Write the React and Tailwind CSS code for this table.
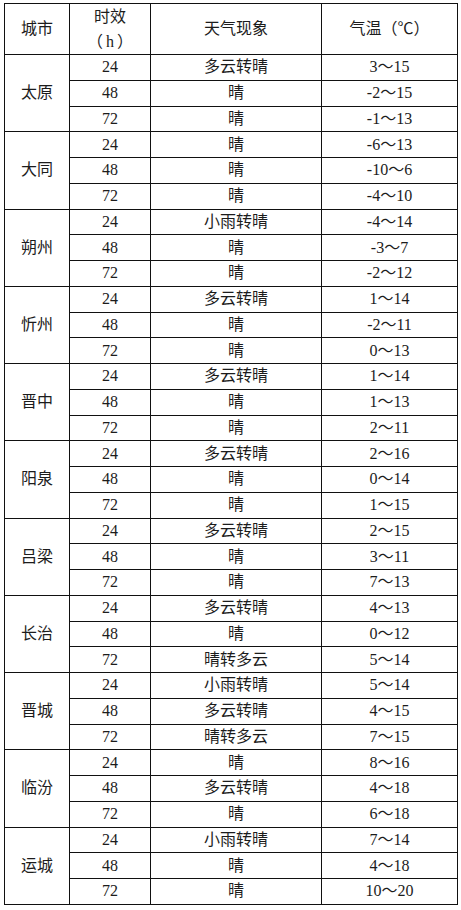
const DATA = [
  { city: "太原", rows: [["24", "多云转晴", "3～15"], ["48", "晴", "-2～15"], ["72", "晴", "-1～13"]] },
  { city: "大同", rows: [["24", "晴", "-6～13"], ["48", "晴", "-10～6"], ["72", "晴", "-4～10"]] },
  { city: "朔州", rows: [["24", "小雨转晴", "-4～14"], ["48", "晴", "-3～7"], ["72", "晴", "-2～12"]] },
  { city: "忻州", rows: [["24", "多云转晴", "1～14"], ["48", "晴", "-2～11"], ["72", "晴", "0～13"]] },
  { city: "晋中", rows: [["24", "多云转晴", "1～14"], ["48", "晴", "1～13"], ["72", "晴", "2～11"]] },
  { city: "阳泉", rows: [["24", "多云转晴", "2～16"], ["48", "晴", "0～14"], ["72", "晴", "1～15"]] },
  { city: "吕梁", rows: [["24", "多云转晴", "2～15"], ["48", "晴", "3～11"], ["72", "晴", "7～13"]] },
  { city: "长治", rows: [["24", "多云转晴", "4～13"], ["48", "晴", "0～12"], ["72", "晴转多云", "5～14"]] },
  { city: "晋城", rows: [["24", "小雨转晴", "5～14"], ["48", "多云转晴", "4～15"], ["72", "晴转多云", "7～15"]] },
  { city: "临汾", rows: [["24", "晴", "8～16"], ["48", "多云转晴", "4～18"], ["72", "晴", "6～18"]] },
  { city: "运城", rows: [["24", "小雨转晴", "7～14"], ["48", "晴", "4～18"], ["72", "晴", "10～20"]] },
];

const cell = "border border-[#111] p-0 text-center align-middle";

export default function App() {
  return (
    <div className="min-h-[910px] bg-white pl-[4px] pt-[3px] font-['Liberation_Serif','Noto_Sans_CJK_SC',serif] text-[16px] leading-none text-[#1c1c1c] [text-spacing-trim:space-all]">
      <table className="w-[453px] table-fixed border-collapse">
        <colgroup>
          <col className="w-[65px]" />
          <col className="w-[81px]" />
          <col className="w-[171px]" />
          <col className="w-[136px]" />
        </colgroup>
        <thead>
          <tr className="h-[51px]">
            <th className={`${cell} font-normal`}>城市</th>
            <th className={`${cell} font-normal`}>
              <div className="flex flex-col items-center gap-[9px]">
                <span>时效</span>
                <span>
                  （<span className="px-[3px]">h</span>）
                </span>
              </div>
            </th>
            <th className={`${cell} font-normal`}>天气现象</th>
            <th className={`${cell} font-normal`}>气温（℃）</th>
          </tr>
        </thead>
        <tbody>
          {DATA.map((group) =>
            group.rows.map((row, i) => (
              <tr key={group.city + row[0]} className="h-[25.76px]">
                {i === 0 && (
                  <td rowSpan={3} className={cell}>
                    {group.city}
                  </td>
                )}
                <td className={cell}>{row[0]}</td>
                <td className={cell}>{row[1]}</td>
                <td className={cell}>{row[2]}</td>
              </tr>
            ))
          )}
        </tbody>
      </table>
    </div>
  );
}
